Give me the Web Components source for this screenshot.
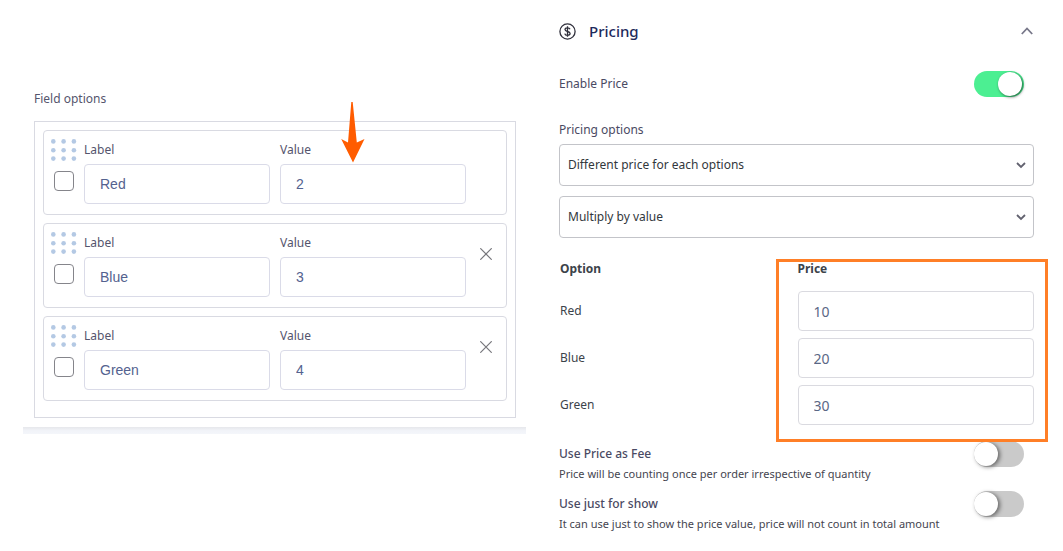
<!DOCTYPE html>
<html lang="en">
<head>
<meta charset="utf-8">
<meta name="viewport" content="width=device-width, initial-scale=1">
<title>Pricing field settings</title>
<style>
  body { margin: 0; background: #fff; font-family: "Noto Sans", "Open Sans", sans-serif; font-size: 12px; line-height: 20px; color: #4a4a63; }
</style>
</head>
<body>
<settings-page>
  <field-options slot="options" heading="Field options">
    <option-card label="Red" value="2"></option-card>
    <option-card label="Blue" value="3" removable></option-card>
    <option-card label="Green" value="4" removable></option-card>
  </field-options>
  <pricing-panel slot="pricing"></pricing-panel>
</settings-page>

<script>
class SettingsPage extends HTMLElement {
  constructor() {
    super();
    this.attachShadow({ mode: "open" }).innerHTML = `
      <style>
        :host { display: block; }
        main { display: grid; grid-template-columns: minmax(0, 503fr) minmax(0, 517fr); column-gap: 12px; align-items: start; padding: 0 8px 0 23px; }
      </style>
      <main><slot name="options"></slot><slot name="pricing"></slot></main>`;
  }
}

class FieldOptions extends HTMLElement {
  constructor() {
    super();
    this.attachShadow({ mode: "open" }).innerHTML = `
      <style>
        :host { display: block; padding-top: 89px; }
        section { padding: 0 10px 9px 11px; }
        h2 { margin: 0 0 12px; font: inherit; color: #55556d; }
        .list { position: relative; display: flex; flex-direction: column; gap: 8px; padding: 8px 8px 16px; border: 1px solid #d9dae2; }
        .edge { height: 7px; background: linear-gradient(#e6e7eb, #f1f3f8 50%, #f4f6fa); }
        .arrow { position: absolute; left: 64%; top: -21px; margin-left: -2px; pointer-events: none; }
      </style>
      <section>
        <h2></h2>
        <div class="list">
          <slot></slot>
          <svg class="arrow" width="26" height="62" viewBox="0 0 26 62" aria-hidden="true">
            <path fill="#ff5c00" d="M11.300 1h1.400L16.800 41.500 24.500 38 13 61.500 1.200 38 8 41.500z"/>
          </svg>
        </div>
      </section>
      <div class="edge"></div>`;
  }
  connectedCallback() {
    this.shadowRoot.querySelector("h2").textContent = this.getAttribute("heading");
  }
}

class OptionCard extends HTMLElement {
  constructor() {
    super();
    this.attachShadow({ mode: "open" }).innerHTML = `
      <style>
        :host { display: block; }
        article { display: grid; grid-template-columns: 40px minmax(0, 1fr) 40px; padding: 8px 0 10px; border: 1px solid #d9dae2; border-radius: 4px; }
        .tools { display: flex; flex-direction: column; align-items: flex-start; gap: 10px; padding-left: 7px; }
        .tools svg { display: block; }
        input[type=checkbox] { appearance: none; box-sizing: border-box; width: 20px; height: 20px; margin: 0 0 0 3px; border: 1px solid #85858b; border-radius: 4px; background: #fff; }
        input[type=checkbox]:checked { background: #85858b; }
        .fields { grid-column: 2; display: grid; grid-template-columns: minmax(0, 1fr) minmax(0, 1fr); column-gap: 10px; }
        .field { display: flex; flex-direction: column; gap: 4px; padding-top: 1px; color: #55556d; }
        input[type=text] { box-sizing: border-box; width: 100%; height: 40px; padding: 0 15px; border: 1px solid #dadbe8; border-radius: 4px; font: 14px/20px "Liberation Sans", Arial, sans-serif; color: #54628f; background: #fff; }
        button { justify-self: center; display: grid; place-items: center; width: 20px; height: 20px; margin: 12px 0 0; padding: 0; border: 0; background: none; cursor: pointer; }
      </style>
      <article>
        <div class="tools">
          <svg width="26" height="22" viewBox="0 0 26 22" fill="#b4c9e4" aria-hidden="true">
            <circle cx="2.3" cy="2.4" r="2.3"/><circle cx="12.6" cy="2.4" r="2.3"/><circle cx="22.9" cy="2.4" r="2.3"/>
            <circle cx="2.3" cy="11.2" r="2.3"/><circle cx="12.6" cy="11.2" r="2.3"/><circle cx="22.9" cy="11.2" r="2.3"/>
            <circle cx="2.3" cy="19.6" r="2.3"/><circle cx="12.6" cy="19.6" r="2.3"/><circle cx="22.9" cy="19.6" r="2.3"/>
          </svg>
          <input type="checkbox" aria-label="Selected by default">
        </div>
        <div class="fields">
          <div class="field"><label for="label">Label</label><input id="label" type="text"></div>
          <div class="field"><label for="value">Value</label><input id="value" type="text"></div>
        </div>
      </article>`;
  }
  connectedCallback() {
    const root = this.shadowRoot;
    root.getElementById("label").value = this.getAttribute("label");
    root.getElementById("value").value = this.getAttribute("value");
    if (this.hasAttribute("removable") && !root.querySelector("button")) {
      const button = document.createElement("button");
      button.type = "button";
      button.setAttribute("aria-label", "Remove option");
      button.innerHTML = `<svg width="12" height="12" viewBox="0 0 12 12" fill="none" stroke="#77777c" stroke-width="1.2"><path d="M.3.3l11.4 11.4M11.7.3L.3 11.7"/></svg>`;
      button.addEventListener("click", () => this.remove());
      root.querySelector("article").append(button);
    }
  }
}

class ToggleRow extends HTMLElement {
  constructor() {
    super();
    this.attachShadow({ mode: "open" }).innerHTML = `
      <style>
        :host { display: flex; align-items: flex-start; justify-content: space-between; padding-right: 10px; }
        .text { padding-top: 3px; white-space: nowrap; }
        label { display: block; color: #4a4a63; }
        :host([emphasis]) label { font-weight: 500; }
        .note { font-size: 11px; color: #45454f; }
        input { appearance: none; flex: none; position: relative; width: 50px; height: 26px; margin: 0; border-radius: 13px; background: #cacaca; cursor: pointer; }
        input::before { content: ""; position: absolute; left: 0; top: 1px; width: 24px; height: 24px; border-radius: 50%; background: #fff; box-shadow: 2px 1px 4px rgba(0, 0, 0, .5); }
        input:checked { background: #4cef92; }
        input:checked::before { left: 24px; box-shadow: 1px 1px 3px rgba(0, 0, 0, .6); }
      </style>
      <div class="text"><label for="switch"></label><div class="note"><slot></slot></div></div>
      <input id="switch" type="checkbox" role="switch">`;
  }
  connectedCallback() {
    this.shadowRoot.querySelector("label").textContent = this.getAttribute("label");
    this.shadowRoot.querySelector("input").checked = this.hasAttribute("checked");
    if (!this.textContent) this.shadowRoot.querySelector(".note").remove();
  }
}

class SelectBox extends HTMLElement {
  constructor() {
    super();
    this.attachShadow({ mode: "open" }).innerHTML = `
      <style>
        :host { display: block; }
        label { display: block; margin-bottom: 4px; color: #4a4a63; }
        label[hidden] { display: none; }
        .box { position: relative; }
        select { appearance: none; box-sizing: border-box; display: block; width: 100%; height: 42px; padding: 0 32px 0 8px; border: 1px solid #c3c4c9; border-radius: 4px; background: #fff; font: inherit; color: #32373c; }
        svg { position: absolute; right: 8px; top: 18px; pointer-events: none; }
      </style>
      <label for="select"></label>
      <div class="box">
        <select id="select"></select>
        <svg width="10" height="7" viewBox="0 0 10 7" fill="none" stroke="#62626f" stroke-width="1.8" aria-hidden="true"><path d="M1 1l4 4 4-4"/></svg>
      </div>`;
  }
  connectedCallback() {
    const label = this.shadowRoot.querySelector("label");
    const select = this.shadowRoot.querySelector("select");
    if (this.hasAttribute("label")) label.textContent = this.getAttribute("label");
    else { label.hidden = true; select.setAttribute("aria-label", this.getAttribute("name")); }
    select.replaceChildren(new Option(this.getAttribute("value")));
  }
}

class PriceTable extends HTMLElement {
  constructor() {
    super();
    this.attachShadow({ mode: "open" }).innerHTML = `
      <style>
        :host { display: block; position: relative; color: #3c434a; }
        table { width: 100%; border-collapse: collapse; table-layout: fixed; }
        th, td { text-align: left; padding: 0 0 7px; }
        thead th { padding: 21px 0 12px; font-weight: 700; }
        th:first-child { padding-left: 1px; font-weight: 400; }
        thead th:first-child { font-weight: 700; width: 50%; }
        tbody th { line-height: 40px; }
        input { display: block; box-sizing: border-box; width: 100%; height: 40px; padding: 0 15px; border: 1px solid #dadae0; border-radius: 4px; background: #fff; font: inherit; font-size: 14px; color: #5a6785; }
        .highlight { position: absolute; z-index: 1; left: calc(50% - 21px); right: -14px; top: 21px; bottom: -10px; border: 3px solid #ff7f27; pointer-events: none; }
      </style>
      <table>
        <thead><tr><th scope="col">Option</th><th scope="col">Price</th></tr></thead>
        <tbody>
          <tr><th scope="row" id="red">Red</th><td><input type="text" value="10" aria-labelledby="red"></td></tr>
          <tr><th scope="row" id="blue">Blue</th><td><input type="text" value="20" aria-labelledby="blue"></td></tr>
          <tr><th scope="row" id="green">Green</th><td><input type="text" value="30" aria-labelledby="green"></td></tr>
        </tbody>
      </table>
      <div class="highlight"></div>`;
  }
}

class PricingPanel extends HTMLElement {
  constructor() {
    super();
    this.attachShadow({ mode: "open" }).innerHTML = `
      <style>
        :host { display: block; padding: 19px 21px 10px; }
        header { display: flex; align-items: center; gap: 13px; height: 24px; }
        h2 { margin: 0; flex: 1; font-size: 15px; line-height: 24px; font-weight: 500; color: #1d2a5c; }
        header svg { display: block; }
        header button { display: grid; place-items: center; width: 14px; height: 24px; padding: 0; border: 0; background: none; cursor: pointer; }
        .enable { margin: 28px 0 23px; }
        .second { margin-top: 10px; }
        .fee { margin-top: 9px; }
        .show { margin-top: 7px; }
      </style>
      <header>
        <svg width="17" height="17" viewBox="0 0 17 17" fill="none" stroke="#30303c" aria-hidden="true">
          <circle cx="8.5" cy="8.5" r="7.6" stroke-width="1.3"/>
          <path stroke-width="1.3" d="M11 6.2C10.700 5.200 9.700 4.800 8.500 4.800 7 4.800 6 5.500 6 6.600c0 2.600 5.100 1.200 5.100 3.900 0 1.100-1.100 1.800-2.600 1.800-1.400 0-2.500-.6-2.700-1.700M8.500 3.300v10.400"/>
        </svg>
        <h2>Pricing</h2>
        <button type="button" aria-label="Collapse pricing">
          <svg width="12" height="8" viewBox="0 0 12 8" fill="none" stroke="#777789" stroke-width="1.8"><path d="M.8 7L6 1.500 11.200 7"/></svg>
        </button>
      </header>
      <toggle-row class="enable" label="Enable Price" checked></toggle-row>
      <select-box label="Pricing options" value="Different price for each options"></select-box>
      <select-box class="second" name="Price calculation" value="Multiply by value"></select-box>
      <price-table></price-table>
      <toggle-row class="fee" emphasis label="Use Price as Fee">Price will be counting once per order irrespective of quantity</toggle-row>
      <toggle-row class="show" emphasis label="Use just for show">It can use just to show the price value, price will not count in total amount</toggle-row>`;
  }
}

customElements.define("settings-page", SettingsPage);
customElements.define("field-options", FieldOptions);
customElements.define("option-card", OptionCard);
customElements.define("toggle-row", ToggleRow);
customElements.define("select-box", SelectBox);
customElements.define("price-table", PriceTable);
customElements.define("pricing-panel", PricingPanel);
</script>
</body>
</html>
